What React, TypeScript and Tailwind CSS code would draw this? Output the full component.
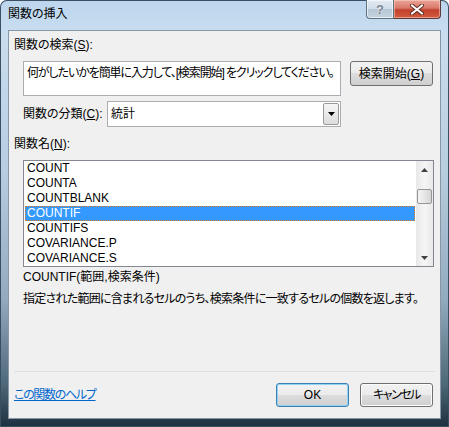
import React from 'react';

const items = ['COUNT', 'COUNTA', 'COUNTBLANK', 'COUNTIF', 'COUNTIFS', 'COVARIANCE.P', 'COVARIANCE.S'];

const btn =
    'rounded-[3px] border bg-[linear-gradient(#f2f2f2_0%,#ebebeb_50%,#dddddd_50%,#cfcfcf_100%)] flex items-center justify-center text-[12px] text-black';

export default function App() {
    return (
        <div
            className="w-[449px] h-[427px] rounded-t-[7px] bg-[linear-gradient(#bcd6ee_0%,#c9ddef_8%,#b7cde0_40%,#93abbf_70%,#4d6878_90%,#1d3040_100%)] shadow-[inset_0_0_0_1px_#3a4f62] flex flex-col text-[12px] text-black [font-family:'Liberation_Sans','Noto_Sans_CJK_JP',sans-serif] [font-feature-settings:'palt']"
        >
            {/* Title bar */}
            <div className="h-[30px] flex items-start pl-[8px] pr-[8px]">
                <div className="mt-[7px] leading-[14px]">関数の挿入</div>
                <div className="ml-auto flex h-[19px]">
                    <div className="w-[28px] h-[19px] rounded-bl-[4px] border border-t-0 border-[#5f7080] bg-[linear-gradient(#e3ebf3_0%,#d0dce8_50%,#b7c7d6_51%,#c5d3df_100%)] shadow-[inset_0_0_0_1px_rgba(255,255,255,0.6)] flex items-center justify-center">
                        <span className="text-[13px] font-bold leading-none text-[#7a8590] [text-shadow:0_0_2px_#fff]">?</span>
                    </div>
                    <div className="w-[47px] h-[19px] rounded-br-[4px] border border-l-0 border-t-0 border-[#5a3a36] bg-[linear-gradient(#eaa697_0%,#d9786a_45%,#c2412d_55%,#d35a3e_100%)] shadow-[inset_0_0_0_1px_rgba(255,220,210,0.5)] flex items-center justify-center">
                        <svg width="14" height="11" viewBox="0 0 14 11">
                            <path d="M2 1.5 L12 9.5 M12 1.5 L2 9.5" stroke="#5a2a20" strokeWidth="4" strokeLinecap="round" />
                            <path d="M2 1.5 L12 9.5 M12 1.5 L2 9.5" stroke="#ffffff" strokeWidth="2.2" strokeLinecap="round" />
                        </svg>
                    </div>
                </div>
            </div>

            {/* Client area */}
            <div className="mx-[8px] h-[389px] border border-[#8797a6] bg-[#f0f0f0] flex flex-col">
                <div className="mt-[7px] ml-[5px] h-[14px] leading-[14px]">
                    関数の検索(<span className="underline">S</span>):
                </div>

                <div className="mt-[9px] ml-[14px] flex gap-[9px]">
                    <div className="w-[318px] h-[35px] border border-[#abadb3] bg-white pl-[3px] pt-[4px] leading-[14px] whitespace-nowrap overflow-hidden tracking-[-1.1px]">
                        何がしたいかを簡単に入力して、[検索開始] をクリックしてください。
                    </div>
                    <div className={`${btn} w-[83px] h-[25px] border-[#707070]`}>
                        検索開始(<span className="underline">G</span>)
                    </div>
                </div>

                <div className="mt-[5px] ml-[14px] flex items-center">
                    <div className="w-[84px] leading-[14px]">
                        関数の分類(<span className="underline">C</span>):
                    </div>
                    <div className="w-[234px] h-[26px] border border-[#abadb3] bg-white flex items-center">
                        <span className="pl-[3px] flex-1">統計</span>
                        <div className="w-[16px] h-[22px] mr-[1px] border border-[#9a9a9a] rounded-[2px] bg-[linear-gradient(#f6f6f6,#dcdcdc)] flex items-center justify-center">
                            <svg width="7" height="4" viewBox="0 0 7 4">
                                <path d="M0 0 H7 L3.5 4 Z" fill="#000" />
                            </svg>
                        </div>
                    </div>
                </div>

                <div className="mt-[10px] ml-[5px] h-[14px] leading-[14px]">
                    関数名(<span className="underline">N</span>):
                </div>

                <div className="mt-[9px] ml-[14px] w-[411px] h-[107px] border border-[#828790] bg-white flex">
                    <div className="flex-1 px-[1px]">
                        {items.map(name => (
                            <div
                                key={name}
                                className={
                                    name === 'COUNTIF'
                                        ? 'h-[15px] leading-[13px] pl-[1px] bg-[#3399ff] text-white border border-dotted border-[#e07a20]'
                                        : 'h-[15px] leading-[15px] pl-[2px]'
                                }
                            >
                                {name}
                            </div>
                        ))}
                    </div>
                    <div className="w-[17px] bg-[linear-gradient(90deg,#e8e8e8,#f5f5f5_50%,#e8e8e8)] flex flex-col items-center">
                        <div className="h-[17px] flex items-center justify-center">
                            <svg width="7" height="4" viewBox="0 0 7 4">
                                <path d="M3.5 0 L7 4 H0 Z" fill="#404040" />
                            </svg>
                        </div>
                        <div className="mt-[11px] w-[15px] h-[15px] rounded-[2px] border border-[#969696] bg-[linear-gradient(90deg,#f4f4f4,#e6e6e6_50%,#d4d4d4)]" />
                        <div className="mt-auto h-[17px] flex items-center justify-center">
                            <svg width="7" height="4" viewBox="0 0 7 4">
                                <path d="M0 0 H7 L3.5 4 Z" fill="#404040" />
                            </svg>
                        </div>
                    </div>
                </div>

                <div className="mt-[3px] ml-[14px] h-[14px] leading-[14px]">COUNTIF(範囲,検索条件)</div>
                <div className="mt-[8px] ml-[14px] h-[14px] leading-[14px] whitespace-nowrap tracking-[-0.75px]">
                    指定された範囲に含まれるセルのうち、検索条件に一致するセルの個数を返します。
                </div>

                <div className="flex-1" />
                <div className="mx-[5px] h-[1px] bg-[#dde1e6]" />

                <div className="h-[46px] flex items-center pl-[5px] pr-[7px]">
                    <span className="text-[#0066cc] underline leading-[14px] tracking-[-1.3px]">この関数のヘルプ</span>
                    <div className="flex-1" />
                    <div className={`${btn} w-[73px] h-[24px] border-[#3c7fb1] shadow-[inset_0_0_0_1px_#8fd3f5]`}>OK</div>
                    <div className={`${btn} ml-[11px] w-[73px] h-[24px] border-[#707070] shadow-[inset_0_0_0_1px_#fcfcfc] tracking-[-1.5px]`}>
                        キャンセル
                    </div>
                </div>
            </div>
        </div>
    );
}
